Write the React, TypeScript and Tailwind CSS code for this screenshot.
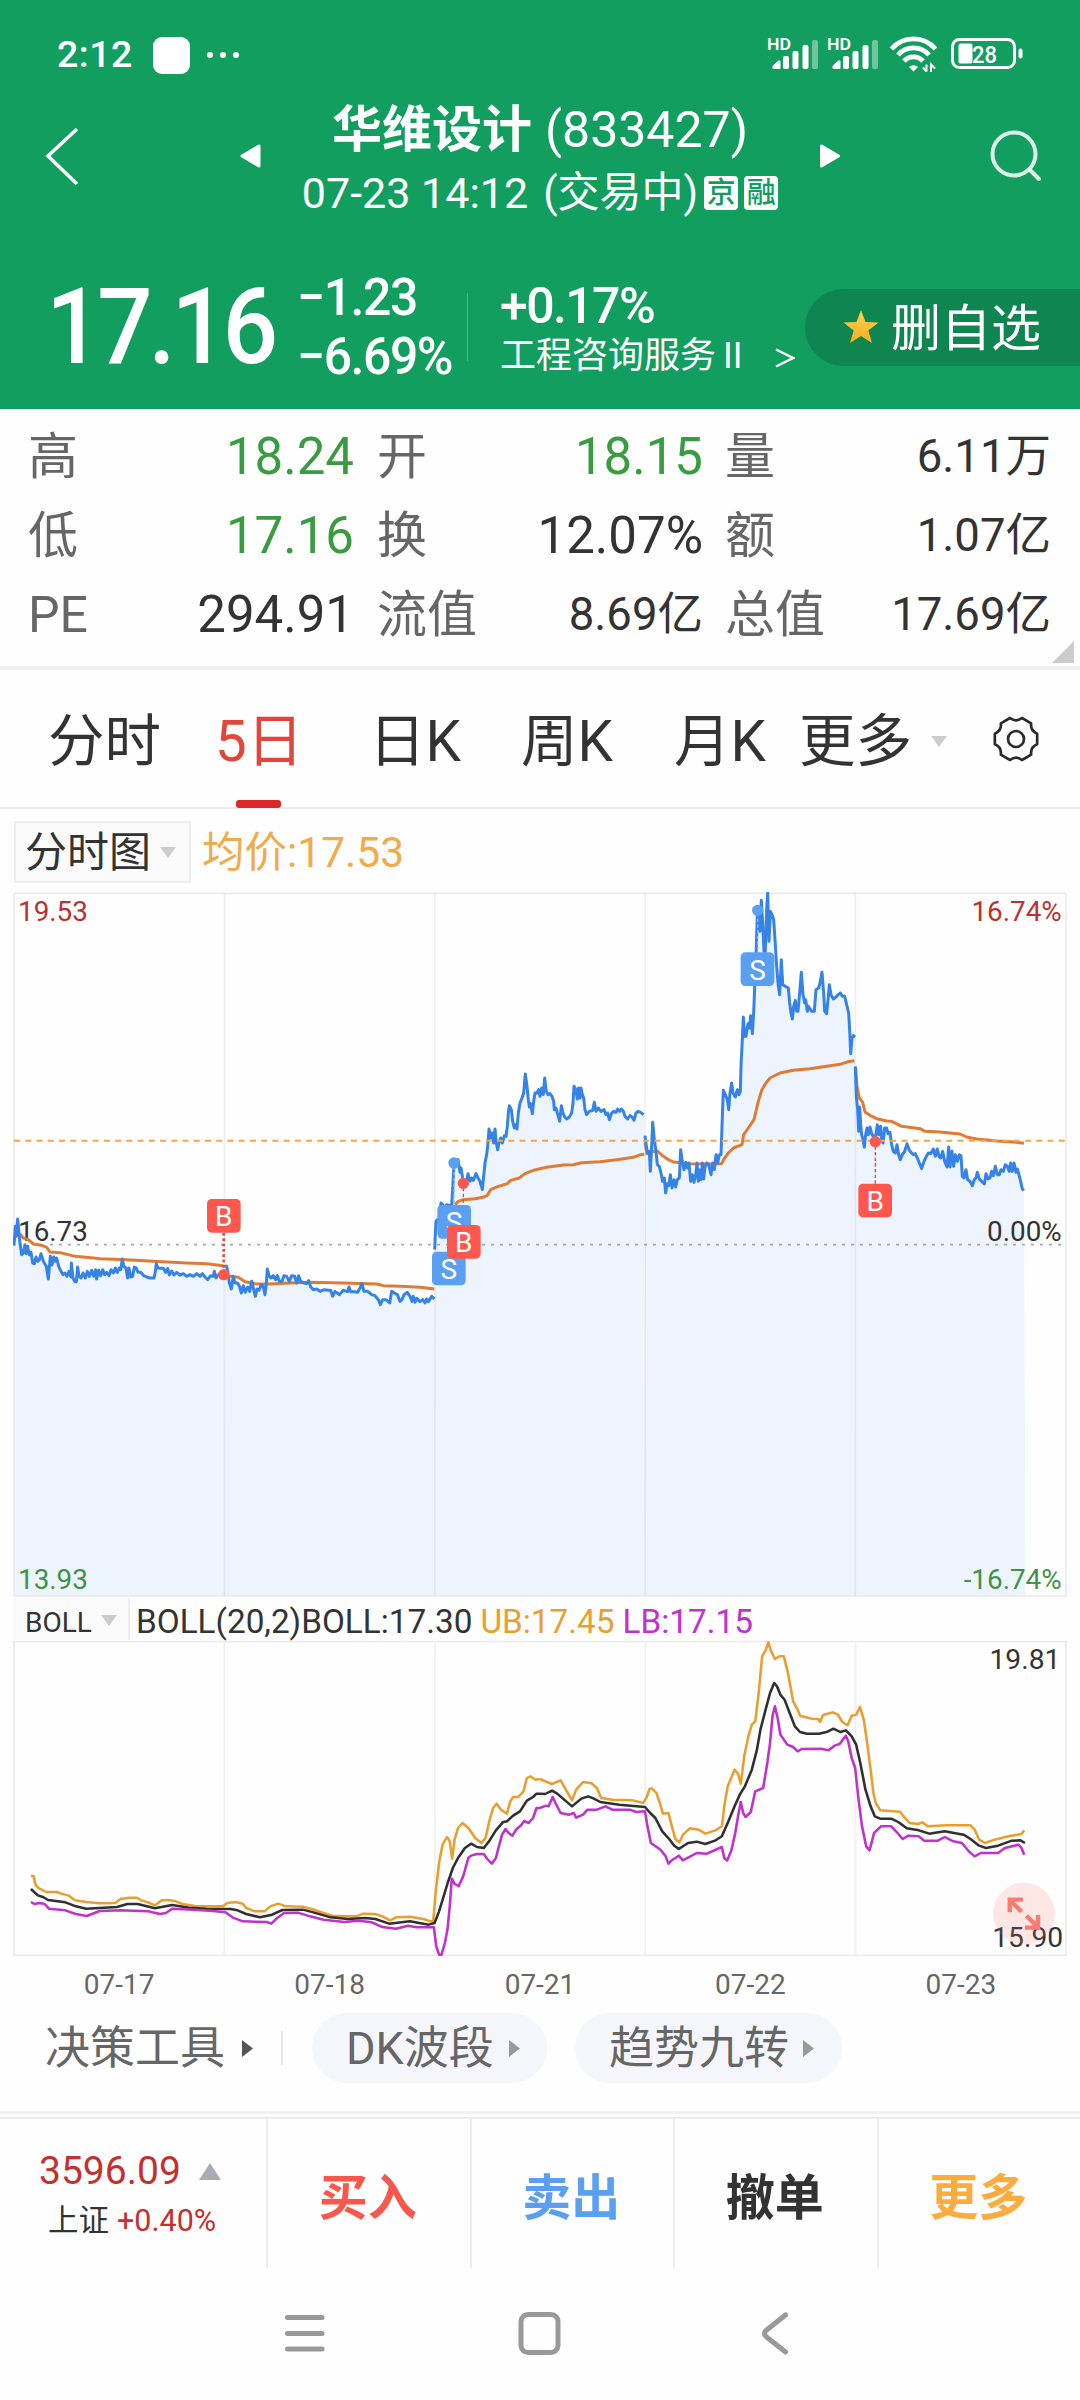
import { Fragment } from 'react';
import clsx from 'clsx';

type Quote = { label: string; value: string; tone?: 'green'; small?: boolean };

const quotes: Quote[][] = [
  [
    { label: '高', value: '18.24', tone: 'green' },
    { label: '低', value: '17.16', tone: 'green' },
    { label: 'PE', value: '294.91' },
  ],
  [
    { label: '开', value: '18.15', tone: 'green' },
    { label: '换', value: '12.07%' },
    { label: '流值', value: '8.69亿', small: true },
  ],
  [
    { label: '量', value: '6.11万', small: true },
    { label: '额', value: '1.07亿', small: true },
    { label: '总值', value: '17.69亿', small: true },
  ],
];

// Price lines, three chart units per pixel; dx is where the session's own axis starts
const sessions = [
  {
    dx: 0,
    from: 42,
    to: 673,
    price:
      '42,1098 46,1040 49,1070 53,1018 57,1060 60,1090 65,1125 70,1120 75,1095 79,1122 83,1100 88,1125 93,1118 98,1150 103,1152 108,1132 113,1145 118,1140 123,1122 128,1140 133,1150 139,1160 145,1198 151,1130 156,1155 161,1132 165,1145 170,1135 176,1160 183,1175 189,1185 195,1180 201,1190 207,1175 213,1192 214,1150 219,1195 225,1206 229,1206 233,1162 237,1190 243,1195 249,1180 256,1195 262,1175 268,1190 275,1172 281,1190 287,1170 290,1198 296,1172 302,1188 308,1170 314,1185 320,1178 327,1188 333,1170 340,1180 346,1165 352,1178 358,1165 362,1170 367,1138 371,1160 378,1165 383,1195 387,1165 392,1192 398,1190 403,1162 409,1165 414,1178 422,1178 430,1187 440,1192 450,1195 462,1195 466,1175 469,1152 474,1165 482,1166 490,1166 497,1178 503,1166 508,1186 515,1174 522,1186 530,1178 540,1186 550,1182 560,1190 570,1185 580,1190 590,1182 600,1190 607,1182 615,1192 623,1200 632,1188 640,1190 643,1175 648,1195 655,1185 665,1185 673,1185',
    average:
      '60,1063 70,1075 85,1080 100,1093 125,1097 140,1103 150,1117 180,1119 225,1130 280,1135 300,1137 380,1140 460,1145 560,1150 620,1152 670,1158',
  },
  {
    dx: 0,
    from: 675,
    to: 1303,
    price:
      '675,1158 680,1160 684,1180 688,1210 694,1228 700,1190 705,1210 713,1210 719,1222 724,1240 730,1218 736,1238 743,1222 749,1235 755,1205 760,1225 766,1250 771,1228 777,1232 784,1215 790,1222 795,1245 799,1210 802,1168 807,1188 813,1195 820,1188 827,1200 832,1188 838,1205 846,1205 852,1188 860,1190 868,1205 875,1188 884,1190 890,1210 896,1188 902,1205 912,1210 920,1212 926,1203 932,1222 940,1230 950,1228 960,1235 972,1230 985,1232 992,1232 998,1250 1005,1235 1018,1245 1030,1232 1043,1236 1047,1222 1052,1236 1062,1236 1073,1238 1080,1225 1086,1212 1092,1235 1103,1235 1115,1245 1125,1248 1135,1260 1141,1275 1148,1260 1158,1260 1169,1270 1175,1235 1183,1240 1192,1245 1200,1265 1206,1260 1212,1245 1222,1238 1230,1250 1236,1265 1240,1250 1245,1268 1250,1256 1260,1266 1268,1260 1275,1270 1280,1258 1285,1266 1295,1250 1303,1258',
    average:
      '690,1190 715,1193 735,1206 770,1213 810,1213 870,1210 930,1208 1030,1210 1130,1213 1150,1218 1200,1220 1260,1223 1303,1228',
  },
  {
    dx: 1200,
    from: 104,
    to: 731,
    price:
      '104,1110 106,1060 108,1025 112,1020 117,1030 120,1000 123,970 128,975 133,985 140,975 148,978 155,975 158,930 162,850 168,845 174,840 180,878 183,865 188,895 192,912 200,905 204,882 210,905 215,895 220,902 228,882 234,895 240,905 247,930 251,890 255,850 260,825 263,800 267,748 272,775 277,760 281,790 285,748 289,790 293,810 297,790 302,775 307,790 313,768 318,770 322,740 325,700 328,678 334,690 338,725 343,745 346,735 351,748 355,700 360,670 366,655 371,640 376,583 381,620 385,660 388,682 392,672 397,702 401,665 405,640 411,640 416,630 420,650 425,625 430,645 434,595 439,635 444,645 450,642 456,650 461,665 463,690 468,685 472,700 475,710 479,725 484,678 489,700 494,712 500,718 508,712 515,700 519,670 522,620 527,628 532,658 536,625 540,655 543,625 547,645 551,655 555,690 560,705 568,695 578,692 583,668 588,695 595,685 603,695 612,690 618,705 623,700 628,720 634,702 641,695 648,698 653,688 659,695 664,688 670,695 675,710 683,718 690,708 696,712 702,722 708,700 714,695 722,698 731,705',
    average:
      '165,975 175,965 190,960 225,957 252,952 262,947 272,930 290,922 322,912 332,902 358,895 375,882 400,872 440,863 490,856 520,855 545,849 600,846 650,840 700,833 722,825 733,824',
  },
  {
    dx: 1200,
    from: 735,
    to: 1365,
    price:
      '735,768 739,800 743,820 748,815 751,875 755,800 758,728 763,780 768,815 772,855 778,860 783,880 788,905 793,895 797,940 801,912 806,918 811,885 816,925 822,900 827,922 832,900 838,895 842,810 847,845 852,870 858,848 862,865 867,850 872,905 877,885 882,908 887,885 891,850 895,905 899,870 903,900 907,850 911,898 915,862 920,850 926,855 933,885 938,850 943,870 948,825 953,850 958,825 963,825 966,740 970,632 976,645 982,660 986,690 990,640 995,610 999,640 1006,652 1012,630 1017,645 1021,635 1023,560 1027,480 1030,412 1034,470 1038,470 1044,432 1048,445 1052,408 1057,462 1061,400 1065,300 1069,200 1072,100 1076,90 1080,155 1084,62 1088,130 1092,215 1096,215 1100,90 1103,40 1107,185 1111,95 1116,105 1121,120 1125,180 1130,260 1135,320 1139,345 1144,240 1148,315 1156,320 1165,325 1169,370 1173,400 1177,418 1181,380 1186,362 1190,395 1194,395 1199,340 1204,278 1209,345 1214,370 1217,360 1222,395 1225,380 1235,395 1243,395 1248,330 1256,325 1260,310 1266,278 1271,340 1274,395 1280,402 1285,350 1288,315 1293,345 1300,358 1308,352 1314,345 1321,340 1327,350 1334,350 1340,375 1346,400 1349,450 1352,522 1356,475 1360,468 1365,472',
    average:
      '735,790 741,822 755,816 772,814 785,826 805,840 820,847 870,852 930,853 965,852 972,838 985,820 1000,805 1026,795 1031,765 1045,745 1062,720 1075,665 1085,632 1098,610 1110,595 1140,580 1180,572 1230,567 1290,558 1320,554 1345,546 1363,543',
  },
  {
    dx: 2160,
    from: 406,
    to: 912,
    price:
      '406,560 409,650 413,690 416,755 419,682 422,735 425,765 429,780 433,803 437,765 441,745 445,765 450,742 455,762 460,770 467,770 472,735 477,765 482,740 485,780 489,790 494,745 500,745 504,762 510,758 515,795 520,815 526,820 531,795 536,825 541,840 547,825 554,815 561,792 568,812 575,820 580,825 586,822 592,835 598,850 605,867 612,845 618,832 625,820 632,822 640,808 646,830 652,808 657,830 662,835 668,815 674,845 681,862 686,802 690,862 696,815 701,860 706,825 712,845 718,825 723,828 727,890 732,895 738,870 743,900 750,905 757,918 763,900 768,895 772,878 778,898 785,905 793,913 798,882 804,898 810,895 815,875 820,888 826,860 832,885 838,885 843,870 850,875 856,855 862,860 868,875 872,850 877,875 882,850 888,878 892,868 897,885 902,905 907,928 912,932',
    average:
      '407,565 411,620 418,655 428,668 435,697 450,707 470,717 500,724 515,725 545,740 600,747 615,755 660,757 720,763 740,772 770,778 830,784 880,787 912,791',
  },
];

// Bollinger bands, split in two halves of the time axis
const bands = [
  {
    color: '#e99f2f',
    left: '90,948 98,950 103,975 112,985 125,992 135,997 165,997 178,1002 200,1008 218,1022 250,1027 290,1031 335,1030 350,1018 375,1014 398,1014 410,1022 430,1028 450,1037 470,1022 490,1021 510,1025 530,1033 570,1040 648,1040 660,1030 685,1027 705,1032 715,1045 740,1055 768,1055 785,1040 808,1032 830,1040 880,1041 905,1048 940,1060 965,1068 1000,1070 1035,1070 1055,1062 1090,1063 1110,1070 1133,1082 1150,1073 1190,1071 1230,1078 1250,1085 1258,1085 1265,1000 1275,910 1285,855 1298,832 1306,845 1313,897 1320,840 1330,805 1343,790 1360,805 1380,835 1398,850 1410,835 1422,780 1432,745 1442,732 1455,750 1472,762 1482,725 1490,712 1505,712 1520,695 1530,655 1540,650 1555,660 1568,658',
    right: '0,658 20,667 35,673 60,662 75,690 93,722 105,690 125,667 150,671 165,685 178,715 210,720 270,722 300,730 310,712 318,688 325,686 338,700 348,730 357,762 373,760 383,800 393,838 405,848 415,825 435,806 460,810 480,822 510,812 528,800 535,740 545,680 555,655 565,630 575,642 583,672 593,590 605,530 615,495 625,485 635,400 645,290 655,272 663,248 670,272 682,298 695,290 708,290 720,340 735,425 748,450 755,468 790,477 808,478 813,487 822,466 850,458 865,465 878,487 893,497 905,468 918,465 929,442 940,480 950,550 960,630 968,700 975,730 988,752 1045,756 1060,775 1073,790 1098,793 1110,788 1125,800 1180,797 1250,797 1262,810 1275,840 1292,850 1320,840 1360,830 1398,823 1406,812',
  },
  {
    color: '#303030',
    left: '90,988 110,1007 125,1012 140,1021 190,1028 215,1038 250,1047 340,1042 370,1033 400,1033 450,1046 500,1036 550,1044 600,1047 670,1048 690,1052 715,1063 755,1073 790,1065 820,1051 880,1050 910,1058 960,1073 1010,1078 1060,1075 1090,1078 1130,1092 1190,1085 1245,1095 1262,1090 1275,1055 1300,970 1315,925 1330,895 1350,865 1368,852 1385,862 1405,865 1420,845 1440,812 1460,788 1472,785 1490,768 1510,755 1530,723 1548,712 1558,702 1568,702',
    right: '0,702 15,703 35,693 50,702 93,740 120,717 140,710 155,716 175,727 230,735 305,742 320,760 335,775 355,815 375,838 390,858 403,868 430,850 455,846 480,853 510,842 528,830 545,790 565,740 580,705 595,680 615,630 630,570 640,510 655,450 668,400 680,370 688,380 698,405 710,420 725,460 740,500 755,517 775,522 810,522 835,516 852,507 872,517 888,512 905,530 918,555 930,610 945,690 960,740 972,770 988,777 1020,777 1040,787 1065,806 1100,812 1130,822 1175,815 1230,825 1250,838 1275,858 1295,865 1330,858 1370,843 1395,842 1408,850',
  },
  {
    color: '#c032cc',
    left: '90,1027 100,1033 115,1030 130,1033 142,1047 190,1052 220,1063 252,1069 290,1054 350,1052 430,1055 465,1063 482,1060 500,1047 560,1050 610,1053 655,1058 675,1073 705,1085 775,1087 788,1092 805,1075 825,1060 865,1059 900,1070 940,1080 1000,1087 1040,1083 1080,1088 1110,1102 1150,1107 1185,1098 1210,1103 1260,1103 1267,1160 1275,1185 1282,1185 1292,1150 1300,1105 1306,1040 1312,957 1320,972 1332,980 1345,950 1360,895 1368,888 1385,883 1405,883 1415,898 1428,912 1440,895 1450,855 1458,825 1468,808 1477,820 1488,828 1500,808 1512,798 1522,784 1535,790 1548,775 1558,745 1568,745',
    right: '0,745 18,738 25,740 37,712 45,730 60,760 85,765 98,760 105,774 125,765 138,750 165,750 190,740 210,750 260,750 280,757 305,755 312,800 322,850 350,870 365,890 373,912 385,900 403,888 415,902 455,880 485,882 528,862 535,895 543,903 555,875 567,820 575,770 583,727 590,760 597,772 612,757 625,695 648,685 660,610 668,550 675,470 682,440 690,475 698,525 718,555 735,562 748,575 760,568 815,567 838,572 855,558 870,553 888,528 895,545 905,595 915,625 925,720 935,800 947,860 957,872 970,820 990,800 1020,800 1038,820 1053,838 1070,828 1100,830 1115,843 1155,843 1175,832 1200,845 1225,850 1245,875 1262,890 1280,880 1330,880 1350,865 1390,855 1398,865 1406,885',
  },
];

const StatusBar = () => (
  <div className="flex h-[92px] items-center pt-[18px] pl-[57px] pr-[55px]">
    <span className="w-[96px] text-[37.5px] font-medium tracking-[0.5px]">2:12</span>
    <span className="size-[37px] rounded-[9px] bg-white" />
    <span className="ml-[17px] flex gap-[7px]">
      <i className="size-[6px] rounded-full bg-white" />
      <i className="size-[6px] rounded-full bg-white" />
      <i className="size-[6px] rounded-full bg-white" />
    </span>
    <svg className="ml-auto h-10 w-[262px]" viewBox="0 0 262 40" fill="#fff">
      {[0, 60].map((x) => (
        <g key={x} transform={`translate(${x} 0)`}>
          <text x="4" y="14.5" fontSize="17" fontWeight="600" textLength="24" lengthAdjust="spacingAndGlyphs">HD</text>
          <path d="M10 31 l5 -5 h2 v7.500 h-7z" stroke="#fff" strokeLinejoin="round" strokeWidth="1" />
          <rect x="20" y="21" width="6" height="13" rx="2" />
          <rect x="29.5" y="16" width="6" height="18" rx="2" />
          <rect x="39.5" y="10" width="6" height="24" rx="2" />
          <rect x="49" y="5" width="6" height="29" rx="2" opacity="0.4" />
        </g>
      ))}
      <g fill="none" stroke="#fff" strokeWidth="4.8">
        <path d="M128.500 14 a29 29 0 0 1 44 0" />
        <path d="M135 20 a20.500 20.500 0 0 1 31 0" />
        <path d="M141 26 a13 13 0 0 1 19 0" />
      </g>
      <path d="M150.500 36.500 l-4.500 -4.500 a7 7 0 0 1 9 0z" />
      <path d="M163.500 29.500 v7 M160 32.500 l3.500 4 M168 37 v-7.500 l4 4" fill="none" stroke="#fff" strokeWidth="2" />
      <rect x="189.5" y="4.5" width="62" height="28" rx="7" fill="none" stroke="#fff" strokeWidth="3" />
      <rect x="255.5" y="13.5" width="4" height="10" rx="2" />
      <rect x="195.5" y="8.5" width="14" height="20" rx="2" />
      <text x="209" y="27.5" fontSize="24" fontWeight="500" textLength="25" lengthAdjust="spacingAndGlyphs">28</text>
    </svg>
  </div>
);

const Header = () => (
  <header className="h-[409px] bg-[#129e5f] text-white">
    <StatusBar />
    <div className="flex h-[128px] items-center">
      <svg className="ml-11 h-[60px] w-9" viewBox="0 0 36 60" fill="none" stroke="#fff" strokeWidth="3.5">
        <path d="M33 3 L4 30 L33 58" />
      </svg>
      <svg className="ml-[158px] h-[26px] w-[24px]" viewBox="0 0 24 26" fill="#fff" stroke="#fff" strokeWidth="3" strokeLinejoin="round">
        <path d="M21 3 V23 L4 13Z" />
      </svg>
      <div className="flex w-[556px] flex-col items-center">
        <div className="flex h-[74px] items-center pt-[2px] text-[50px]">
          <b className="mr-[13px] font-bold">华维设计</b>
          <span>(833427)</span>
        </div>
        <div className="flex h-[54px] items-center text-[42px] whitespace-pre">
          <span className="text-[43px]">07-23 14:12</span>
          <span className="ml-[15px]">(交易中)</span>
          {['京', '融'].map((tag) => (
            <span key={tag} className="ml-[6px] flex size-[34px] items-center justify-center rounded-[4px] bg-white text-[29px] font-medium text-[#129e5f]">
              {tag}
            </span>
          ))}
        </div>
      </div>
      <svg className="h-[26px] w-[24px]" viewBox="0 0 24 26" fill="#fff" stroke="#fff" strokeWidth="3" strokeLinejoin="round">
        <path d="M3.500 3 V23 L20.500 13Z" />
      </svg>
      <svg className="ml-[146px] h-[56px] w-[56px]" viewBox="0 0 56 56" fill="none" stroke="#fff" strokeWidth="4" strokeOpacity="0.85" strokeLinecap="round">
        <circle cx="26" cy="26" r="21.5" />
        <path d="M42 42 L51 51" />
      </svg>
    </div>
    <div className="flex h-[189px] items-center pt-[25px]">
      <div className="w-[297px] pl-[46px]">
        <span className="inline-block origin-left scale-x-[0.92] text-[106px] font-medium tracking-[-4.5px]">17.16</span>
      </div>
      <div className="w-[170px] text-[52px] leading-[58px] font-medium tracking-[-1.5px]">
        <p className="origin-left scale-x-[0.96]">−1.23</p>
        <p className="origin-left scale-x-[0.96] pt-px">−6.69%</p>
      </div>
      <div className="h-[68px] w-px bg-white/25" />
      <div className="w-[337px] pt-[8px] pl-[32px] leading-[50px]">
        <p className="text-[50px] font-medium tracking-[-1.6px]">+0.17%</p>
        <p className="flex text-[36px]">
          工程咨询服务 <span className="ml-[7px]">II</span>
          <svg className="mt-[17px] ml-[32px] h-[20px] w-[20px]" viewBox="0 0 20 20" fill="none" stroke="#fff" strokeWidth="2.5">
            <path d="M1 1.500 L18 10 L1 18.500" />
          </svg>
        </p>
      </div>
      <div className="flex h-[77px] flex-1 items-center rounded-l-full bg-[#0f854f] pl-[37px]">
        <svg className="h-[36px] w-[38px]" viewBox="0 0 38 36">
          <defs>
            <linearGradient id="star" x1="0" y1="0" x2="0" y2="1">
              <stop offset="0" stopColor="#fbd04f" />
              <stop offset="1" stopColor="#fdae22" />
            </linearGradient>
          </defs>
          <path d="M19 1 L23.500 13 L36.500 13.500 L26.300 21.500 L30 34 L19 27 L8 34 L11.700 21.500 L1.500 13.500 L14.500 13Z" fill="url(#star)" />
        </svg>
        <span className="ml-[11px] pt-[3px] text-[50px] whitespace-nowrap">删自选</span>
      </div>
    </div>
  </header>
);

const QuoteTable = () => (
  <section className="relative flex h-[257px] pt-[8px] pl-[28px] text-[#333]">
    {quotes.map((column, i) => (
      <div key={i} className={clsx(i === 0 && 'w-[326px]', i === 1 && 'ml-[23px] w-[326px]', i === 2 && 'ml-[22px] w-[326px]')}>
        {column.map(({ label, value, tone, small }) => (
          <div key={label} className="flex h-[79px] items-center justify-between">
            <span className="text-[50px] text-[#666]">{label}</span>
            <span className={clsx(small ? 'text-[45.5px]' : 'text-[51px]', tone === 'green' && 'text-[#3a9c40]')}>{value}</span>
          </div>
        ))}
      </div>
    ))}
    <svg className="absolute right-[6px] bottom-[3px] size-[22px]" viewBox="0 0 22 22">
      <path d="M22 0 V22 H0Z" fill="#ccc" />
    </svg>
  </section>
);

const Caret = ({ className }: { className?: string }) => (
  <svg className={className} viewBox="0 0 16 11">
    <path d="M0 0 H16 L8 11Z" fill="#ccc" />
  </svg>
);

const PeriodTabs = () => (
  <nav className="flex h-[139px] items-center border-b-2 border-[#ebebeb] pt-[8px] pl-[48px] text-[56.5px] text-[#333]">
    <span className="w-[167px]">分时</span>
    <span className="relative w-[154px] text-[#e0473c]">
      5日
      <i className="absolute top-[86px] left-[21px] h-[8px] w-[45px] rounded-[3px] bg-[#dc2828]" />
    </span>
    <span className="w-[152px]">日K</span>
    <span className="w-[153px]">周K</span>
    <span className="w-[125px]">月K</span>
    <span className="w-[132px]">更多</span>
    <Caret className="mt-[-3px] h-[11px] w-[16px]" />
    <svg className="mt-[-7px] ml-[45px] size-[48px]" viewBox="-72 -72 144 144" fill="none" stroke="#2a2a2a" strokeWidth="8" strokeLinejoin="round">
      <path d="M-18 -63 Q0 -49 18 -63 L45.500 -47 Q42.400 -24.500 63.500 -16 L63.500 16 Q42.400 24.500 45.500 47 L18 63 Q0 49 -18 63 L-45.500 47 Q-42.400 24.500 -63.500 16 L-63.500 -16 Q-42.400 -24.500 -45.500 -47Z" />
      <circle r="24" />
    </svg>
  </nav>
);

const TradeMark = ({ x, y, side }: { x: number; y: number; side: 'B' | 'S' }) => (
  <g transform={`translate(${x} ${y})`}>
    <rect width="101" height="101" rx="14" fill={side === 'B' ? '#ff574d' : '#5b9ff2'} />
    <text x="50.5" y="82" fontSize="84" textAnchor="middle" fill="#fff">{side}</text>
  </g>
);

const PriceChart = () => (
  <svg className="mt-[9px] ml-[13px] block h-[706px] w-[1055px]" viewBox="39 37 3165 2118">
    {sessions.map(({ dx, from, to, price }) => (
      <polygon key={price} transform={`translate(${dx} 0)`} fill="#edf4fe" points={`${from},2149 ${price} ${to + 4},2149`} />
    ))}
    <rect x="42" y="41" width="3156" height="2108" fill="none" stroke="#e9ebee" strokeWidth="5" />
    <path d="M673.500 40 V2149 M1305 40 V2149 M1935 40 V2149 M2566 40 V2149" stroke="#000" strokeOpacity="0.06" strokeWidth="5" />
    <path d="M150 1095 H3185" stroke="#a5a8ad" strokeWidth="5" strokeDasharray="9 18" />
    <g fontSize="83.5" fill="#333">
      <text x="54" y="123" fill="#bd3030">19.53</text>
      <text x="54" y="1085">16.73</text>
      <text x="54" y="2128" fill="#3f9346">13.93</text>
      <text x="3185" y="123" textAnchor="end" fill="#bd3030">16.74%</text>
      <text x="3185" y="1085" textAnchor="end">0.00%</text>
      <text x="3185" y="2128" textAnchor="end" fill="#3f9346">-16.74%</text>
    </g>
    <g fill="none" strokeWidth="9" strokeLinejoin="round">
      {sessions.map(({ dx, price, average }) => (
        <g key={price} transform={`translate(${dx} 0)`}>
          <polyline points={average} stroke="#e17b34" />
          <polyline points={price} stroke="#3583e6" />
        </g>
      ))}
    </g>
    <path d="M42 783 H3198" stroke="#f0a74b" strokeWidth="6" strokeDasharray="18 15.700" />
    <path d="M671 1060 V1170" stroke="#e8463e" strokeWidth="8" strokeDasharray="8 8" />
    <path d="M1390 925 V1040 M2626 800 V912" stroke="#e8463e" strokeWidth="4" strokeDasharray="10 7" />
    <path d="M1362 860 V980 M2273 100 V220" stroke="#8dbaf3" strokeWidth="4" strokeDasharray="10 7" />
    <circle cx="671" cy="1185" r="17" fill="#ff574d" />
    <circle cx="1362" cy="850" r="17" fill="#5b9ff2" />
    <circle cx="1390" cy="911" r="17" fill="#ff574d" />
    <circle cx="2273" cy="92" r="17" fill="#5b9ff2" />
    <circle cx="2626" cy="786" r="17" fill="#ff574d" />
    <TradeMark x={621} y={958} side="B" />
    <TradeMark x={1296} y={1116} side="S" />
    <TradeMark x={1312} y={976} side="S" />
    <TradeMark x={1341} y={1036} side="B" />
    <TradeMark x={2222} y={218} side="S" />
    <TradeMark x={2575} y={912} side="B" />
  </svg>
);

const BollChart = () => (
  <svg className="ml-[13px] block h-[317px] w-[1055px]" viewBox="38 241 3063 951" preserveAspectRatio="none">
    <rect x="41" y="246" width="3054" height="941" fill="none" stroke="#ececec" strokeWidth="5" />
    <path d="M651.500 246 V1187 M1263 246 V1187 M1874 246 V1187 M2484.500 246 V1187" stroke="#f0f0f0" strokeWidth="5" />
    <g fill="none" strokeWidth="7.5" strokeLinejoin="round">
      {bands.map(({ color, left, right }) => (
        <Fragment key={color}>
          <polyline points={left} stroke={color} />
          <polyline points={right} stroke={color} transform="translate(1568 0)" />
        </Fragment>
      ))}
    </g>
    <g fontSize="82" fill="#333" textAnchor="end">
      <text x="3079" y="329">19.81</text>
      <text x="3087" y="1163">15.90</text>
    </g>
    <ellipse cx="2973" cy="1062" rx="90" ry="93" fill="#f8766a" fillOpacity="0.17" />
    <g fill="none" stroke="#fa7c70" strokeWidth="13">
      <path d="M2966 1056 L2932 1022 M2932 1058 V1020 H2970" />
      <path d="M2980 1068 L3014 1102 M3014 1066 V1104 H2976" />
    </g>
  </svg>
);

const Play = ({ className }: { className?: string }) => (
  <svg className={className} viewBox="0 0 11 17" fill="currentColor">
    <path d="M0 0 L11 8.500 L0 17Z" />
  </svg>
);

const Tools = () => (
  <div className="flex h-[98px] items-center pl-[45px] text-[45px] text-[#666]">
    <span>决策工具</span>
    <Play className="ml-[17px] h-[17px] w-[11px] text-[#555]" />
    <i className="ml-[28px] h-[34px] w-[2px] bg-[#e6e6e6]" />
    <div className="ml-[29px] flex h-[70px] w-[235px] items-center rounded-full bg-[#f5f6fb] pl-[34px]">
      DK波段
      <Play className="ml-[15px] h-[17px] w-[11px] text-[#999]" />
    </div>
    <div className="ml-[28px] flex h-[70px] w-[267px] items-center rounded-full bg-[#f5f6fb] pl-[34px]">
      趋势九转
      <Play className="ml-[14px] h-[17px] w-[11px] text-[#999]" />
    </div>
  </div>
);

const actions = [
  { label: '买入', color: 'text-[#f8584c]' },
  { label: '卖出', color: 'text-[#5b9ff2]' },
  { label: '撤单', color: 'text-[#333]' },
  { label: '更多', color: 'text-[#fbac3e]' },
];

const TradeBar = () => (
  <div className="flex h-[151px] border-t-2 border-[#ebebeb]">
    <div className="flex w-[266px] flex-col pt-[27px] text-[#c4302f]">
      <p className="flex h-[50px] items-center pl-[39px] text-[39px]">
        3596.09
        <svg className="ml-[18px] h-[17px] w-[22px]" viewBox="0 0 22 17">
          <path d="M11 0 L22 17 H0Z" fill="#a9adb3" />
        </svg>
      </p>
      <p className="flex h-[50px] items-center gap-[8px] pl-[48px] text-[30.5px]">
        <span className="text-[#333]">上证</span>
        <span>+0.40%</span>
      </p>
    </div>
    {actions.map(({ label, color }) => (
      <button key={label} className={clsx('flex flex-1 items-center justify-center border-l-2 border-[#eee] pt-[9px] pr-[2px] text-[49px] font-bold', color)}>
        {label}
      </button>
    ))}
  </div>
);

const SystemNav = () => (
  <svg className="block h-[132px] w-[1080px]" viewBox="0 1 1080 132" fill="none" stroke="#999" strokeWidth="5" strokeLinecap="round" strokeLinejoin="round">
    <path d="M287.500 50.500 H322 M287.500 66.500 H322 M287.500 82 H322" />
    <rect x="521" y="47.5" width="37" height="38" rx="7" />
    <path d="M785.500 48 L766 63.500 Q763 66.500 766 69.500 L785.500 85" />
  </svg>
);

const App = () => {
  return (
    <div className="h-[2400px] w-[1080px] overflow-hidden bg-[#fefefe] font-[Roboto,'Noto_Sans_CJK_SC',sans-serif] leading-none">
      <Header />
      <QuoteTable />
      <div className="h-[4px] bg-[#f1f1f1]" />
      <PeriodTabs />
      <div className="mt-[12px] ml-[14px] flex h-[62px] text-[42px]">
        <div className="flex w-[177px] items-center border-2 border-[#eee] bg-[#fafafa] pt-px pl-[9px] text-[#333]">
          分时图
          <Caret className="ml-[9px] h-[11px] w-[16px]" />
        </div>
        <span className="ml-[11px] flex items-center pt-[2px] text-[42.5px] text-[#efab4c]">均价:17.53</span>
      </div>
      <PriceChart />
      <div className="ml-[14px] flex h-[42px]">
        <div className="flex w-[116px] items-center border-r-2 border-[#eee] bg-[#fafafa] pt-[8px] pl-[11px] text-[28px] text-[#333]">
          BOLL
          <Caret className="mb-[6px] ml-[9px] h-[11px] w-[16px]" />
        </div>
        <p className="flex items-center gap-[8px] pt-[5px] pl-[6px] text-[33.3px]">
          <span className="text-[#333]">BOLL(20,2)BOLL:17.30</span>
          <span className="text-[#e99f2f]">UB:17.45</span>
          <span className="text-[#c032cc]">LB:17.15</span>
        </p>
      </div>
      <BollChart />
      <div className="grid h-[42px] grid-cols-5 px-[14px] pt-[14px] text-center text-[28px] text-[#666]">
        {['07-17', '07-18', '07-21', '07-22', '07-23'].map((day) => (
          <span key={day}>{day}</span>
        ))}
      </div>
      <Tools />
      <div className="mt-[14px] mb-[3px] h-[3px] bg-[#f1f1f1]" />
      <TradeBar />
      <SystemNav />
    </div>
  );
};

export default App;
